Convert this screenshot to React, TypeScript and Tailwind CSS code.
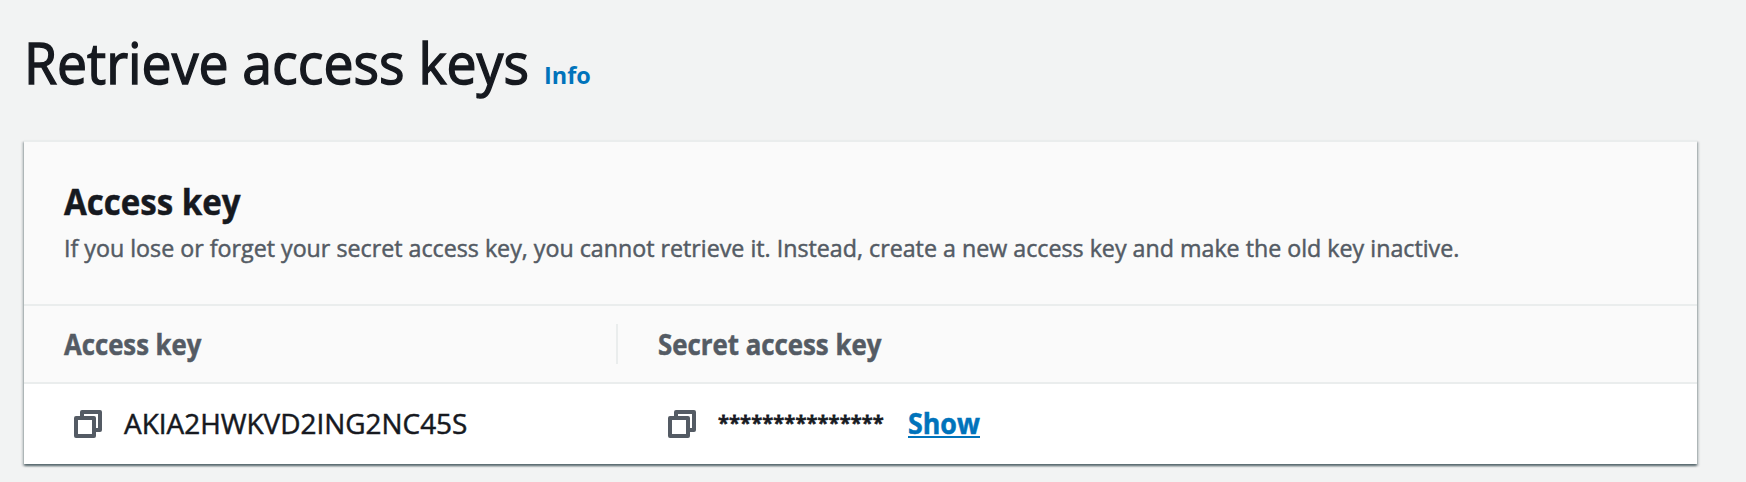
function CopyIcon() {
  return (
    <svg width="28" height="28" viewBox="0 0 28 28" fill="none" stroke="#545b64" strokeWidth="4" strokeLinejoin="round" className="shrink-0">
      <rect x="2" y="8" width="18" height="18" />
      <path d="M8 8V2h18v18h-6" />
    </svg>
  );
}

const stroke = "[-webkit-text-stroke:0.5px_currentColor]";

export default function App() {
  return (
    <main className="h-[482px] w-full overflow-hidden bg-[#f2f3f3] pt-[26px] pl-6 font-['Open_Sans',sans-serif] text-[#16191f]">
      <header className="flex h-[72px] items-baseline whitespace-nowrap">
        <h1 className="w-[520px] origin-left scale-x-[0.956] text-[56px] leading-[72px] font-normal [-webkit-text-stroke:1.4px_currentColor]">
          Retrieve access keys
        </h1>
        <a href="#" className="origin-left scale-x-[0.977] text-[24px] font-bold text-[#0073bb]">Info</a>
      </header>

      <section className="mt-[42px] h-[324px] w-[1673px] border-t-2 border-[#eaeded] bg-white shadow-[0_2px_2px_0_rgba(0,28,36,0.5),2px_2px_2px_0_rgba(0,28,36,0.15),-2px_2px_2px_0_rgba(0,28,36,0.15)]">
        <div className="h-[164px] border-b-2 border-[#eaeded] bg-[#fafafa] pt-[38px] pl-10 whitespace-nowrap">
          <h2 className={`w-fit origin-left scale-x-[0.918] text-[36px] leading-[44px] font-bold ${stroke}`}>Access key</h2>
          <p className={`mt-[6px] w-fit origin-left scale-x-[0.968] text-[24px] leading-9 text-[#545b64] ${stroke}`}>
            If you lose or forget your secret access key, you cannot retrieve it. Instead, create a new access key and make the old key inactive.
          </p>
        </div>

        <div className={`flex h-[78px] items-center border-b-2 border-[#eaeded] bg-[#fafafa] text-[28px] font-bold whitespace-nowrap text-[#545b64] ${stroke}`}>
          <div className="flex h-10 w-[594px] items-center border-r-2 border-[#eaeded] pl-10">
            <span className="origin-left scale-x-[0.918]">Access key</span>
          </div>
          <div className="flex h-10 items-center pl-10">
            <span className="origin-left scale-x-[0.922]">Secret access key</span>
          </div>
        </div>

        <div className="flex h-20 items-center text-[28px] whitespace-nowrap">
          <div className="flex w-[594px] items-center pl-[50px]">
            <CopyIcon />
            <span className={`ml-[22px] origin-left scale-x-[0.997] pb-[2px] ${stroke}`}>AKIA2HWKVD2ING2NC45S</span>
          </div>
          <div className="flex items-center pl-[50px]">
            <CopyIcon />
            <span className="ml-[22px] w-[190px] pb-[2px] text-[20px] leading-[30px] font-semibold tracking-[0.1px] [-webkit-text-stroke:0.8px_currentColor]">***************</span>
            <a href="#" className={`flex h-[28px] w-[72px] items-center border-b-2 border-[#0073bb] font-bold text-[#0073bb] ${stroke}`}>
              <span className="origin-left scale-x-[0.957]">Show</span>
            </a>
          </div>
        </div>
      </section>
    </main>
  );
}
